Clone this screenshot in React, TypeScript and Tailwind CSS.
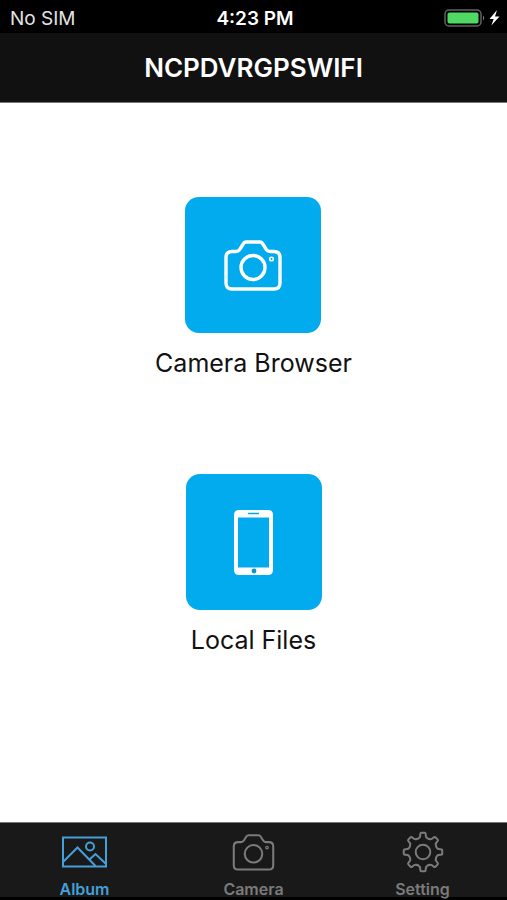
import type { ReactNode } from "react";

function CameraIcon({ className, strokeWidth }: { className: string; strokeWidth: number }) {
  return (
    <svg viewBox="0 0 58 52" className={className} fill="none" stroke="currentColor" strokeWidth={strokeWidth} strokeLinejoin="round" aria-hidden="true">
      <path d="M7 12.500H12Q14.500 12.500 16 10L19.500 4.500Q20.500 3 22 3H36Q37.500 3 38.500 4.500L42 10Q43.500 12.500 46 12.500H50Q56 12.500 56 18.500V44Q56 50 50 50H8Q2 50 2 44V18.500Q2 12.500 8 12.500" />
      <circle cx="29" cy="28.500" r="12" />
      <circle cx="47.500" cy="20" r="1.800" strokeWidth="1.600" />
    </svg>
  );
}

function PhoneIcon() {
  return (
    <svg viewBox="0 0 39 65" className="h-[65px] w-[39px]" aria-hidden="true">
      <path fill="currentColor" fillRule="evenodd" d="M5 0H34Q39 0 39 5V60Q39 65 34 65H5Q0 65 0 60V5Q0 0 5 0ZM4 7.500V57.500H35V7.500Z" />
      <path d="M14.500 3.500H24.500" stroke="#04a9ea" strokeWidth="1.300" strokeLinecap="round" />
      <circle cx="20" cy="61" r="2.400" fill="#0795cb" />
    </svg>
  );
}

function AlbumIcon() {
  return (
    <svg viewBox="0 0 45 32" className="h-8 w-[45px]" fill="none" stroke="currentColor" strokeWidth="2" aria-hidden="true">
      <rect x="1" y="1.500" width="43" height="29" />
      <path d="M1.500 25.500L15.500 11.500L33.500 30M27.500 23.500L33.500 18L43.500 27.500" />
      <circle cx="28" cy="10.500" r="4" />
    </svg>
  );
}

const toothAngles = Array.from({ length: 8 }, (_, i) => i * 45 - 90);

function polar(radius: number, degrees: number) {
  const a = (degrees * Math.PI) / 180;
  return `${(21 + radius * Math.cos(a)).toFixed(2)} ${(21 + radius * Math.sin(a)).toFixed(2)}`;
}

const gearPath =
  toothAngles
    .map(
      (d, i) =>
        `${i === 0 ? "M" : "L"}${polar(17.5, d - 9)}Q${polar(19.4, d - 8)} ${polar(19.3, d - 5)}L${polar(19.3, d + 5)}Q${polar(19.4, d + 8)} ${polar(17.5, d + 9)}Q${polar(14.6, d + 11)} ${polar(14.6, d + 17)}Q${polar(13.8, d + 22.5)} ${polar(14.6, d + 28)}Q${polar(14.6, d + 34)} ${polar(17.5, d + 36)}`,
    )
    .join("") + "Z";

function GearIcon() {
  return (
    <svg viewBox="0 0 42 42" className="h-[42px] w-[42px]" fill="none" stroke="currentColor" strokeWidth="2" strokeLinejoin="round" aria-hidden="true">
      <path d={gearPath} />
      <circle cx="21" cy="21" r="7.300" />
    </svg>
  );
}

function StatusBar() {
  return (
    <div className="grid h-[33px] grid-cols-3 items-center bg-black pt-1 pr-[7px] pl-[10px] text-[19px] leading-6 text-[#e4e4e4]">
      <span>No SIM</span>
      <span className="text-center font-semibold text-white">4:23 PM</span>
      <svg viewBox="0 0 56 20" className="h-5 w-14 justify-self-end" aria-label="Battery charging" role="img">
        <rect x="1" y="1" width="36" height="16" rx="4" fill="none" stroke="#626262" strokeWidth="1.500" />
        <rect x="3.500" y="3.500" width="31" height="11" rx="2" fill="#4fd964" />
        <path d="M39 6.500Q41.500 9 39 11.500Z" fill="#777" />
        <path d="M53 1L45.500 10H49.700L47.300 16.500L55.500 7.500H51Z" fill="#fff" />
      </svg>
    </div>
  );
}

function Tile({ label, children }: { label: string; children: ReactNode }) {
  return (
    <button type="button" className="flex flex-col items-center gap-[14px] text-[25px] leading-8 text-[#111]">
      <span className="flex h-34 w-34 items-center justify-center rounded-[14px] bg-[#02abee] text-white">{children}</span>
      <span>{label}</span>
    </button>
  );
}

function Tab({ label, active = false, children }: { label: string; active?: boolean; children: ReactNode }) {
  return (
    <button
      type="button"
      aria-current={active ? "page" : undefined}
      className={`flex flex-1 flex-col items-center gap-1 text-base leading-4 font-semibold ${active ? "text-[#459fd8]" : "text-[#7b7b7b]"}`}
    >
      <span className="flex h-[50px] items-center">{children}</span>
      <span>{label}</span>
    </button>
  );
}

export default function App() {
  return (
    <div className="flex min-h-screen flex-col bg-white font-['Inter',sans-serif]">
      <StatusBar />
      <header className="flex h-[70px] items-center justify-center border-b border-[#777] bg-[#111]">
        <h1 className="text-[26px] leading-8 font-semibold text-white">NCPDVRGPSWIFI</h1>
      </header>
      <main className="flex flex-1 flex-col items-center gap-[95px] pt-[94px]">
        <Tile label="Camera Browser">
          <CameraIcon className="h-[52px] w-[58px]" strokeWidth={3.4} />
        </Tile>
        <Tile label="Local Files">
          <PhoneIcon />
        </Tile>
      </main>
      <nav className="flex border-t border-b-3 border-t-[#777] border-b-black bg-[#191919] pt-1">
        <Tab label="Album" active>
          <AlbumIcon />
        </Tab>
        <Tab label="Camera">
          <CameraIcon className="h-[38px] w-[43px]" strokeWidth={2.8} />
        </Tab>
        <Tab label="Setting">
          <GearIcon />
        </Tab>
      </nav>
    </div>
  );
}
